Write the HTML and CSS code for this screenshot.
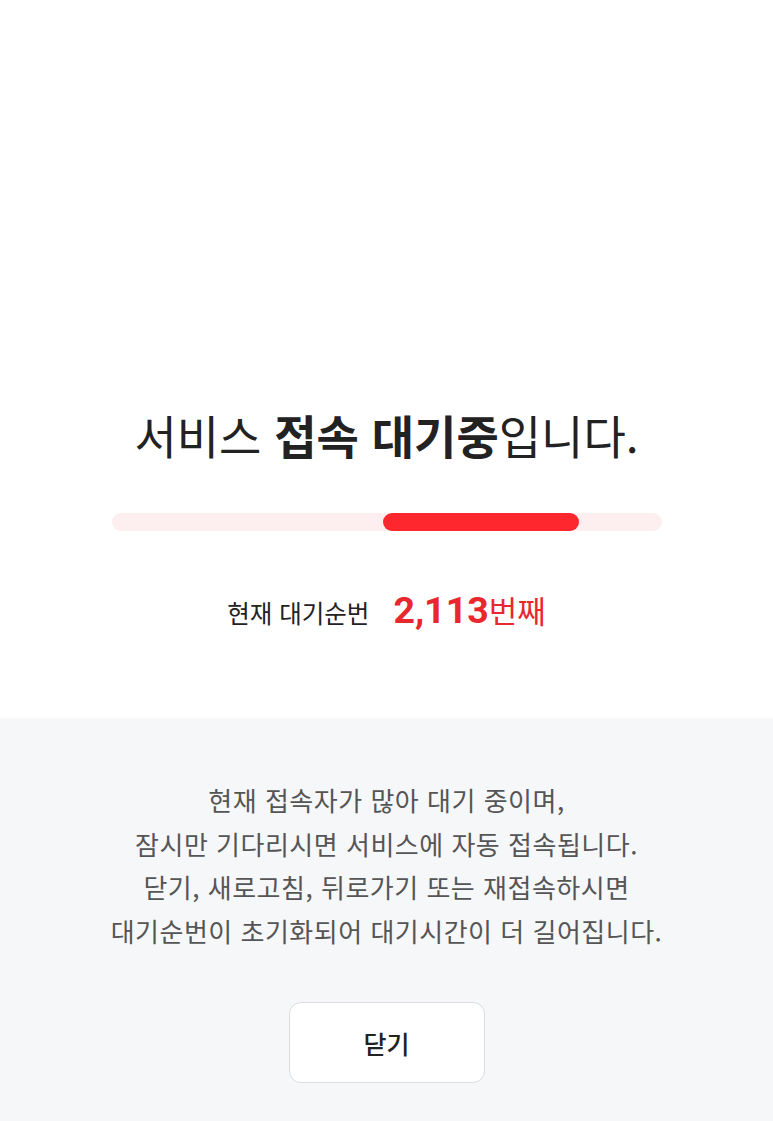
FILE: index.html
```html
<!DOCTYPE html>
<html lang="ko">
<head>
    <meta charset="UTF-8">
    <meta name="viewport" content="width=device-width, initial-scale=1.0">
    <title>서비스 접속 대기중</title>
    <link rel="stylesheet" href="styles.css">
</head>
<body>
<main>
    <section class="wait-top">
        <h1 class="wait-title">서비스 <b>접속 대기중</b>입니다.</h1>
        <div class="progress">
            <div class="progress-fill"></div>
        </div>
        <p class="wait-count">
            <span class="count-label">현재 대기순번</span>
            <span class="count-num">2,113</span><span class="count-unit">번째</span>
        </p>
    </section>
    <section class="wait-info">
        <p>현재 접속자가 많아 대기 중이며,<br>잠시만 기다리시면 서비스에 자동 접속됩니다.</p>
        <p>닫기, 새로고침, 뒤로가기 또는 재접속하시면<br>대기순번이 초기화되어 대기시간이 더 길어집니다.</p>
        <button type="button" class="btn-close">닫기</button>
    </section>
</main>
</body>
</html>
```

FILE: styles.css
```css
body {
    margin: 0;
    padding: 0;
    font-family: "Noto Sans CJK KR", "Noto Sans", sans-serif;
    color: #222;
    background: #f6f7f9;
}
main {
    display: flex;
    flex-direction: column;
    min-height: 100vh;
}
.wait-top {
    height: 718px;
    box-sizing: border-box;
    padding-top: 403px;
    background: #fff;
    display: flex;
    flex-direction: column;
    align-items: center;
}
.wait-title {
    margin: 0;
    font-size: 46px;
    line-height: 62px;
    font-weight: 400;
    color: #222;
}
.wait-title b {
    font-weight: 700;
}
.progress {
    margin-top: 48px;
    width: 550px;
    height: 18px;
    border-radius: 9px;
    background: #fdeef0;
    position: relative;
}
.progress-fill {
    position: absolute;
    left: 271px;
    top: 0;
    width: 196px;
    height: 18px;
    border-radius: 9px;
    background: #fe272d;
}
.wait-count {
    margin: 54px 0 0;
    line-height: 50px;
    display: flex;
    align-items: baseline;
}
.count-label {
    font-size: 24.5px;
    color: #222;
    margin-right: 24px;
}
.count-num {
    font-family: Roboto, "Noto Sans", sans-serif;
    font-size: 37.5px;
    font-weight: 700;
    color: #e8272e;
}
.count-unit {
    font-size: 31px;
    color: #e8272e;
}
.wait-info {
    flex: 1;
    padding-top: 60px;
    padding-bottom: 36px;
    display: flex;
    flex-direction: column;
    align-items: center;
    text-align: center;
}
.wait-info p {
    margin: 0;
    font-size: 26px;
    line-height: 43.5px;
    color: #555;
    letter-spacing: 0.5px;
}
.btn-close {
    margin-top: 50px;
    width: 196px;
    height: 81px;
    background: #fff;
    border: 1px solid #dcdde0;
    border-radius: 12px;
    font-family: "Noto Sans CJK KR", sans-serif;
    font-size: 25px;
    font-weight: 500;
    color: #222;
}
```
